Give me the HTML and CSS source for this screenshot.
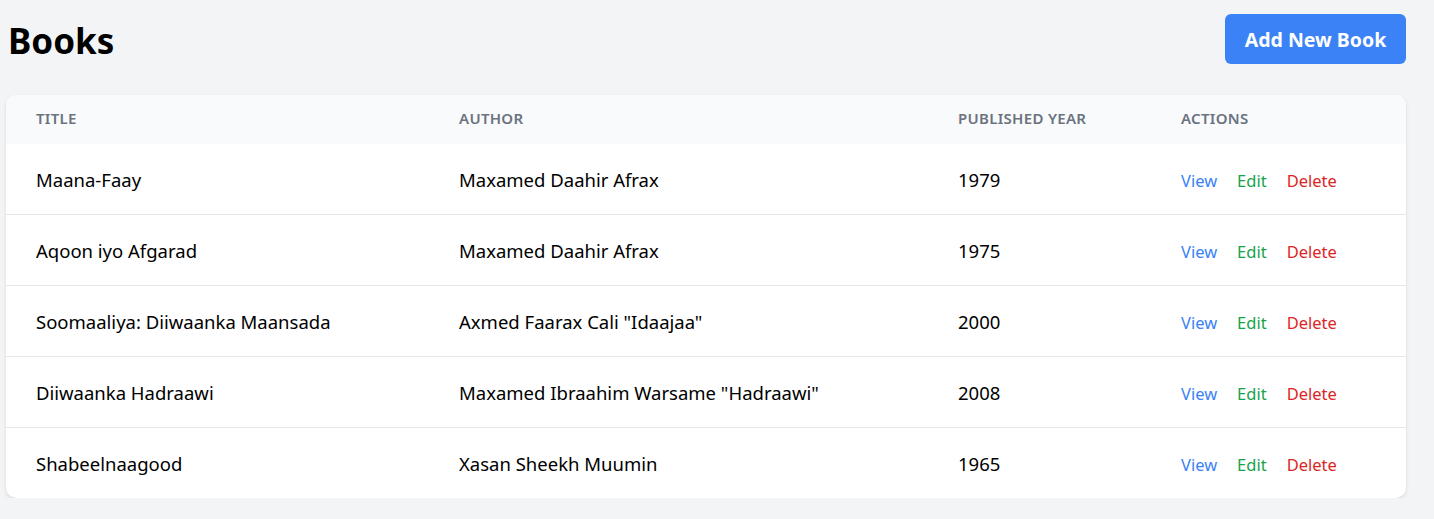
FILE: index.html
```html
<!DOCTYPE html>
<html lang="en">
<head>
<meta charset="utf-8">
<title>Books</title>
<link rel="stylesheet" href="styles.css">
</head>
<body>
<div class="page">
  <div class="topbar">
    <h1 class="title">Books</h1>
    <button class="btn-add">Add New Book</button>
  </div>
  <div class="card">
    <table class="table">
      <colgroup>
        <col class="c1"><col class="c2"><col class="c3"><col class="c4">
      </colgroup>
      <thead>
        <tr><th>Title</th><th>Author</th><th>Published Year</th><th>Actions</th></tr>
      </thead>
      <tbody>
        <tr><td>Maana-Faay</td><td>Maxamed Daahir Afrax</td><td>1979</td><td class="actions"><a class="view">View</a><a class="edit">Edit</a><a class="del">Delete</a></td></tr>
        <tr><td>Aqoon iyo Afgarad</td><td>Maxamed Daahir Afrax</td><td>1975</td><td class="actions"><a class="view">View</a><a class="edit">Edit</a><a class="del">Delete</a></td></tr>
        <tr><td>Soomaaliya: Diiwaanka Maansada</td><td>Axmed Faarax Cali "Idaajaa"</td><td>2000</td><td class="actions"><a class="view">View</a><a class="edit">Edit</a><a class="del">Delete</a></td></tr>
        <tr><td>Diiwaanka Hadraawi</td><td>Maxamed Ibraahim Warsame "Hadraawi"</td><td>2008</td><td class="actions"><a class="view">View</a><a class="edit">Edit</a><a class="del">Delete</a></td></tr>
        <tr><td>Shabeelnaagood</td><td>Xasan Sheekh Muumin</td><td>1965</td><td class="actions"><a class="view">View</a><a class="edit">Edit</a><a class="del">Delete</a></td></tr>
      </tbody>
    </table>
  </div>
</div>
</body>
</html>
```
FILE: styles.css
```css
* { box-sizing: border-box; }
html, body { margin: 0; padding: 0; }
body {
  background: #f3f4f6;
  font-family: "Noto Sans", "Open Sans", sans-serif;
  color: #000;
}
.page {
  padding: 14px 28px 0 6px;
}
.topbar {
  display: flex;
  justify-content: space-between;
  align-items: flex-start;
  height: 81px;
}
.title {
  margin: 0;
  padding-left: 2px;
  font-size: 35px;
  font-weight: 700;
  line-height: 54px;
}
.btn-add {
  width: 181px;
  height: 50px;
  background: #3b82f6;
  color: #fff;
  border: none;
  border-radius: 6px;
  font-family: inherit;
  font-size: 19.5px;
  font-weight: 700;
  padding: 0;
}
.card {
  background: #fff;
  border-radius: 10px;
  box-shadow: 0 2px 4px rgba(0,0,0,0.08), 0 1px 2px rgba(0,0,0,0.06);
  overflow: hidden;
}
.table {
  width: 100%;
  border-collapse: collapse;
  table-layout: fixed;
}
.c1 { width: 423px; }
.c2 { width: 499px; }
.c3 { width: 223px; }
.c4 { width: auto; }
th {
  background: #f9fafb;
  height: 49px;
  padding: 0 0 3px 30px;
  text-align: left;
  font-size: 15px;
  font-weight: 600;
  letter-spacing: 0.02em;
  text-transform: uppercase;
  color: #6b7280;
}
td {
  height: 71px;
  padding: 1px 0 0 30px;
  font-size: 18.5px;
  border-top: 1px solid #e5e7eb;
  white-space: nowrap;
}
tbody tr:first-child td { border-top: none; height: 70px; }
.actions a {
  font-size: 16.5px;
  margin-right: 20px;
}
.view { color: #3b82f6; }
.edit { color: #16a34a; }
.del { color: #dc2626; }
```
